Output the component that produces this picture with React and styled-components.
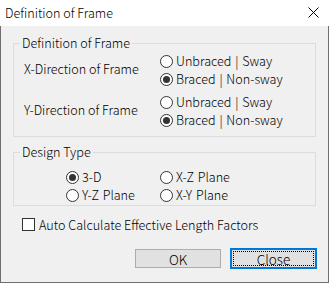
import React from "react";
import styled, { createGlobalStyle } from "styled-components";

const Global = createGlobalStyle`
  html, body { margin: 0; padding: 0; background: #ffffff; }
  body { font-family: "Noto Sans CJK KR", "Liberation Sans", sans-serif; font-size: 12.6px; font-weight: 300; color: #000; }
  * { box-sizing: border-box; }
`;

const Window = styled.div`
  width: 329px;
  height: 283px;
  display: flex;
  flex-direction: column;
  background: #ffffff;
`;

const TitleBar = styled.div`
  height: 26px;
  display: flex;
  align-items: center;
  justify-content: space-between;
  padding: 0 10px 1px 5px;
  background: #ffffff;
  line-height: 14px;
`;

const CloseGlyph = styled.svg`
  width: 11px;
  height: 11px;
  display: block;
`;

const Client = styled.div`
  flex: 1;
  display: flex;
  flex-direction: column;
  background: #f0f0f0;
  border: 1px solid #6f6f6f;
  border-top: none;
`;

const Group = styled.fieldset`
  margin: ${(p) => p.$top}px 12px 0 12px;
  padding: ${(p) => p.$pad};
  border: 1px solid #dcdcdc;
  min-width: 0;
`;

const Legend = styled.legend`
  margin-left: 6px;
  padding: 0 2px;
  line-height: 14px;
  height: 14px;
`;

const DirBlock = styled.div`
  display: flex;
  align-items: center;
  margin-top: ${(p) => p.$top}px;
`;

const DirLabel = styled.div`
  width: 146px;
  padding-left: 10px;
  line-height: 14px;
  margin-top: -3px;
`;

const RadioCol = styled.div`
  display: flex;
  flex-direction: column;
`;

const Choice = styled.label`
  height: 18px;
  display: flex;
  align-items: center;
  line-height: 14px;
  white-space: nowrap;
  word-spacing: 1px;
`;

const Circle = styled.span`
  width: 13px;
  height: 13px;
  border-radius: 50%;
  border: 1px solid #333333;
  background: #ffffff;
  margin-right: 3px;
  flex: none;
  display: flex;
  align-items: center;
  justify-content: center;
  &::after {
    content: "";
    width: 7px;
    height: 7px;
    border-radius: 50%;
    background: ${(p) => (p.$on ? "#333333" : "transparent")};
  }
`;

const TypeGrid = styled.div`
  display: grid;
  grid-template-columns: 94px 94px;
  padding-left: 52px;
`;

const CheckRow = styled.label`
  display: flex;
  align-items: center;
  margin: 12px 0 0 21px;
  height: 13px;
  line-height: 14px;
`;

const Box = styled.span`
  width: 13px;
  height: 13px;
  border: 1px solid #333333;
  background: #ffffff;
  margin-right: 4px;
  flex: none;
`;

const Buttons = styled.div`
  display: flex;
  justify-content: flex-end;
  align-items: center;
  gap: 8px;
  margin-top: 17px;
  padding-right: 11px;
`;

const Button = styled.div`
  width: ${(p) => (p.$focus ? 87 : 86)}px;
  height: ${(p) => (p.$focus ? 21 : 19)}px;
  margin: ${(p) => (p.$focus ? 0 : 1)}px;
  background: #e1e1e1;
  border: ${(p) => (p.$focus ? "2px solid #0078d7" : "1px solid #adadad")};
  display: flex;
  align-items: center;
  justify-content: center;
  position: relative;
  line-height: 14px;
  font-size: 13.5px;
  ${(p) =>
    p.$focus &&
    `&::after {
      content: "";
      position: absolute;
      inset: 1px;
      border: 1px dotted #000000;
    }`}
`;

function Radio({ on, children }) {
  return (
    <Choice>
      <Circle $on={on} />
      {children}
    </Choice>
  );
}

export default function App() {
  return (
    <>
      <Global />
      <Window>
        <TitleBar>
          <span>Definition of Frame</span>
          <CloseGlyph viewBox="0 0 11 11">
            <path d="M0.5 0.5 L10.5 10.5 M10.5 0.5 L0.5 10.5" stroke="#000" strokeWidth="1" fill="none" />
          </CloseGlyph>
        </TitleBar>
        <Client>
          <Group $top={10} $pad="0 0 7px 0">
            <Legend>Definition of Frame</Legend>
            <DirBlock $top={2}>
              <DirLabel>X-Direction of Frame</DirLabel>
              <RadioCol>
                <Radio>Unbraced | Sway</Radio>
                <Radio on>Braced | Non-sway</Radio>
              </RadioCol>
            </DirBlock>
            <DirBlock $top={5}>
              <DirLabel>Y-Direction of Frame</DirLabel>
              <RadioCol>
                <Radio>Unbraced | Sway</Radio>
                <Radio on>Braced | Non-sway</Radio>
              </RadioCol>
            </DirBlock>
          </Group>
          <Group $top={8} $pad="9px 0 1px 0">
            <Legend>Design Type</Legend>
            <TypeGrid>
              <Radio on>3-D</Radio>
              <Radio>X-Z Plane</Radio>
              <Radio>Y-Z Plane</Radio>
              <Radio>X-Y Plane</Radio>
            </TypeGrid>
          </Group>
          <CheckRow>
            <Box />
            Auto Calculate Effective Length Factors
          </CheckRow>
          <Buttons>
            <Button>OK</Button>
            <Button $focus>Close</Button>
          </Buttons>
        </Client>
      </Window>
    </>
  );
}
